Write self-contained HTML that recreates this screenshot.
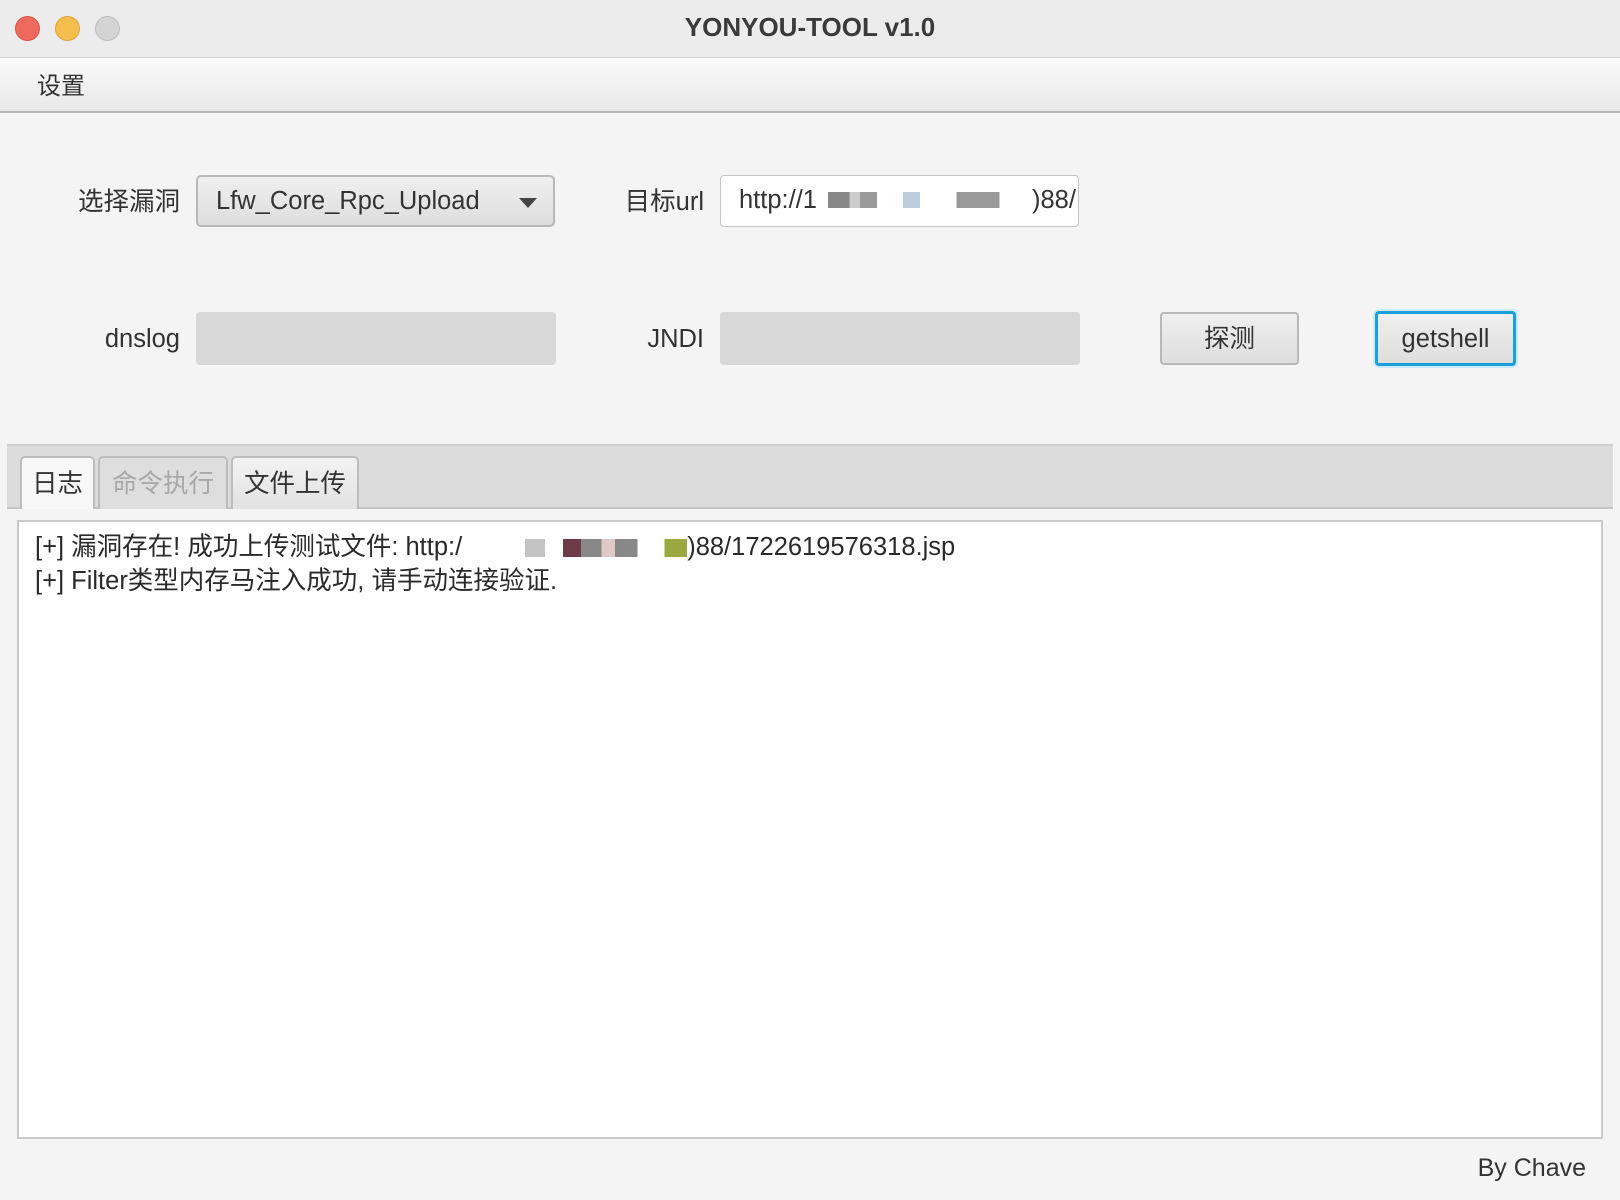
<!DOCTYPE html>
<html><head><meta charset="utf-8"><style>
*{margin:0;padding:0;box-sizing:border-box}
body{width:1620px;height:1200px;background:#f4f4f4;font-family:"Liberation Sans","Noto Sans CJK SC",sans-serif;color:#333;position:relative;overflow:hidden}
.abs{position:absolute}
.title{left:0;top:0;width:1620px;height:58px;background:#ececec;border-bottom:1px solid #d6d6d6}
.title .t{position:absolute;left:0;width:100%;top:12px;text-align:center;font-weight:bold;font-size:26px;color:#3a3a3a}
.dot{position:absolute;top:16px;width:25px;height:25px;border-radius:50%}
.menu{left:0;top:58px;width:1620px;height:55px;background:linear-gradient(#fbfbfb,#e8e8e8);border-bottom:2px solid #b5b5b5}
.lbl{font-size:25.5px;color:#333;text-align:right;line-height:30px}
.field{background:#fff;border:1px solid #c4c4c4;border-radius:4px}
.dis{background:#d8d8d8;border-radius:4px}
.btn{border:2px solid #b8b8b8;border-radius:4px;background:linear-gradient(#efefef,#dedede);font-size:25.5px;text-align:center;color:#333}
.tabband{left:7px;top:444px;width:1606px;height:65px;background:#dcdcdc;border-top:2px solid #cfcfcf;border-bottom:2px solid #c4c4c4}
.tab{top:456px;height:53px;border:2px solid #bdbdbd;border-bottom:none;border-radius:5px 5px 0 0;font-size:25.5px;text-align:center;line-height:52px;background:linear-gradient(#f2f2f2,#e2e2e2)}
.ta{left:17px;top:520px;width:1586px;height:619px;background:#fff;border:2px solid #cacaca}
.log{font-size:25.5px;color:#2a2a2a;left:35px;line-height:30px}
</style></head><body>
<div class="abs title"><div class="dot" style="left:15px;background:#ee6a5e;border:1px solid #d9534a"></div><div class="dot" style="left:55px;background:#f5bf4f;border:1px solid #dca53a"></div><div class="dot" style="left:95px;background:#d4d4d4;border:1px solid #bdbdbd"></div><div class="t">YONYOU-TOOL v1.0</div></div>
<div class="abs menu"><span class="abs" style="left:37px;top:8px;font-size:24px">设置</span></div>

<div class="abs lbl" style="left:40px;width:140px;top:187px">选择漏洞</div>
<div class="abs btn" style="left:196px;top:175px;width:359px;height:52px;text-align:left;padding:10px 0 0 18px;border-radius:5px">Lfw_Core_Rpc_Upload<span class="abs" style="right:16px;top:21px;width:0;height:0;border-left:9px solid transparent;border-right:9px solid transparent;border-top:10px solid #444"></span></div>
<div class="abs lbl" style="left:560px;width:144px;top:187px">目标url</div>
<div class="abs field" style="left:720px;top:175px;width:359px;height:52px;font-size:25.5px;padding:10px 0 0 18px;white-space:nowrap;overflow:hidden">http://1<span style="display:inline-block;width:215px;height:16px;background:linear-gradient(90deg,#fff 0 5%,#888 5% 15%,#ccc 15% 20%,#999 20% 28%,#fff 28% 40%,#bcd 40% 48%,#fff 48% 65%,#999 65% 85%,#fff 85%)"></span>)88/</div>

<div class="abs lbl" style="left:40px;width:140px;top:324px">dnslog</div>
<div class="abs dis" style="left:196px;top:312px;width:360px;height:53px"></div>
<div class="abs lbl" style="left:560px;width:144px;top:324px">JNDI</div>
<div class="abs dis" style="left:720px;top:312px;width:360px;height:53px"></div>
<div class="abs btn" style="left:1160px;top:312px;width:139px;height:53px;line-height:51px">探测</div>
<div class="abs btn" style="left:1375px;top:311px;width:141px;height:55px;line-height:51px;border:3px solid #1a9fd6;box-shadow:0 0 0 2px #cbe9f6">getshell</div>

<div class="abs tabband"></div>
<div class="abs tab" style="left:20px;width:75px;background:#f8f8f8">日志</div>
<div class="abs tab" style="left:98px;width:130px;color:#a8a8a8;background:#dedede">命令执行</div>
<div class="abs tab" style="left:231px;width:128px">文件上传</div>

<div class="abs ta"></div>
<div class="abs log" style="top:532px">[+] 漏洞存在! 成功上传测试文件: http:/<span style="display:inline-block;width:225px;height:18px;vertical-align:-2px;background:linear-gradient(90deg,#fff 0 28%,#c4c4c4 28% 37%,#fff 37% 45%,#6e3a48 45% 53%,#888 53% 62%,#e0c8c8 62% 68%,#888 68% 78%,#fff 78% 90%,#9aa840 90%)"></span>)88/1722619576318.jsp</div>
<div class="abs log" style="top:566px">[+] Filter类型内存马注入成功, 请手动连接验证.</div>
<div class="abs" style="right:34px;top:1154px;font-size:25px;color:#333">By Chave</div>
</body></html>
